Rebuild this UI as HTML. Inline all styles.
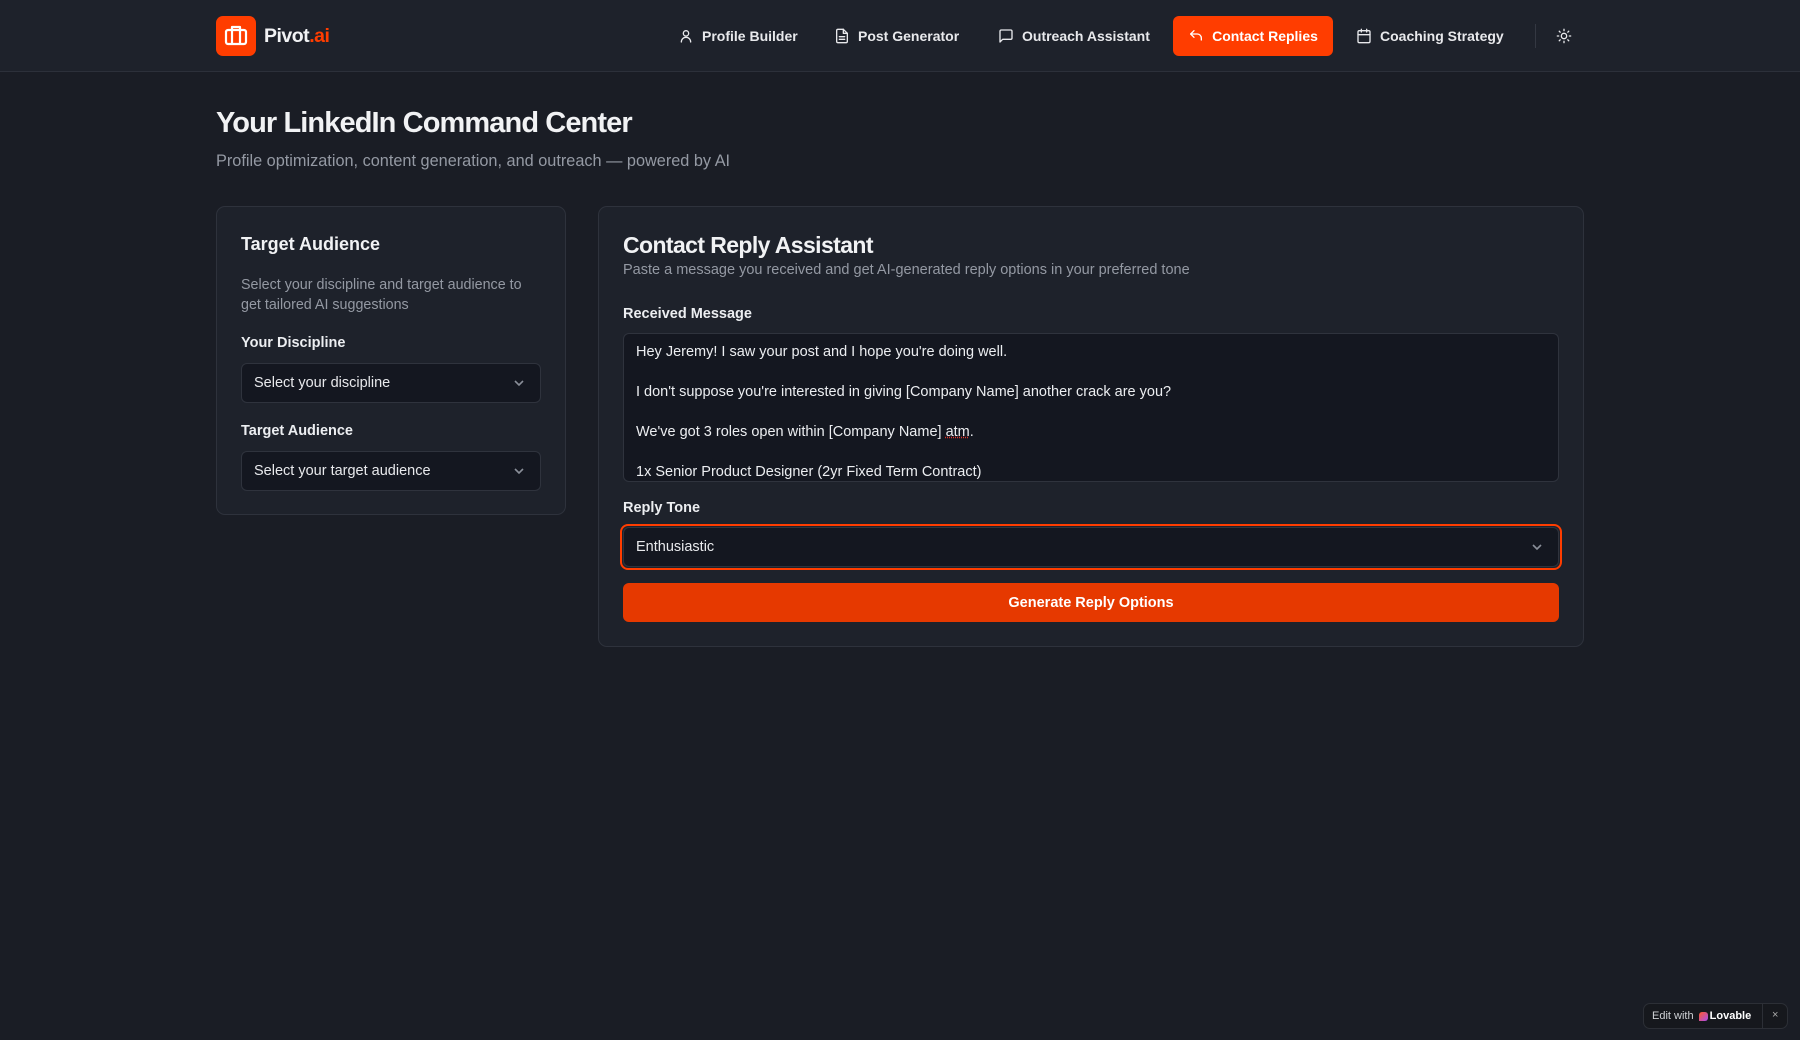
<!DOCTYPE html>
<html><head><meta charset="utf-8"><style>
*{box-sizing:border-box;margin:0;padding:0}
body{width:1800px;height:1040px;background:#1a1d25;font-family:"Liberation Sans",sans-serif;color:#f1f2f4;position:relative;overflow:hidden}
.abs{position:absolute}
header{position:absolute;left:0;top:0;width:1800px;height:72px;background:#1e222b;border-bottom:1px solid #2c303a}
.nav{position:absolute;top:16px;height:40px;display:flex;align-items:center;gap:8px;font-size:14px;font-weight:600;color:#e8e9ec}
.nav svg{width:16px;height:16px;fill:none;stroke:#e8e9ec;stroke-width:2;stroke-linecap:round;stroke-linejoin:round}
.card{position:absolute;background:#1e222b;border:1px solid #2e323c;border-radius:9px}
.lbl{position:absolute;font-size:14.5px;font-weight:600;color:#eceef1}
.sel{position:absolute;background:#141720;border:1px solid #2f333d;border-radius:6px;font-size:14.5px;color:#e8e9ec;display:flex;align-items:center;padding-left:12px}
.chev{position:absolute;right:14px;top:50%;margin-top:-5px;width:14px;height:10px}
.muted{color:#9499a3}
</style></head><body>
<header>
  <div class="abs" style="left:216px;top:16px;width:40px;height:40px;background:#ff3d00;border-radius:7px">
    <svg width="40" height="40" viewBox="0 0 40 40" fill="none" stroke="#fff" stroke-width="2.2" stroke-linejoin="round"><rect x="10" y="14" width="20" height="14" rx="2"/><path d="M16 14v-3h8v3M16 14v14M24 14v14"/></svg>
  </div>
  <div class="abs" style="left:264px;top:25px;font-size:19.5px;font-weight:700;letter-spacing:-0.5px">Pivot<span style="color:#ff3d00">.ai</span></div>
  <div class="nav" style="left:678px"><svg viewBox="0 0 24 24"><circle cx="12" cy="8" r="4"/><path d="M5 21c0-4 3-7 7-7s7 3 7 7"/></svg>Profile Builder</div>
  <div class="nav" style="left:834px"><svg viewBox="0 0 24 24"><path d="M14 2H6a2 2 0 0 0-2 2v16a2 2 0 0 0 2 2h12a2 2 0 0 0 2-2V8z"/><path d="M14 2v6h6M16 13H8M16 17H8"/></svg>Post Generator</div>
  <div class="nav" style="left:998px"><svg viewBox="0 0 24 24"><path d="M21 15a2 2 0 0 1-2 2H7l-4 4V5a2 2 0 0 1 2-2h14a2 2 0 0 1 2 2z"/></svg>Outreach Assistant</div>
  <div class="nav" style="left:1173px;width:160px;background:#ff3d00;border-radius:6px;justify-content:center;color:#fff"><svg viewBox="0 0 24 24" style="stroke:#fff"><path d="M9 14 4 9l5-5"/><path d="M4 9h10a6 6 0 0 1 6 6v3"/></svg>Contact Replies</div>
  <div class="nav" style="left:1356px"><svg viewBox="0 0 24 24"><rect x="3" y="4" width="18" height="18" rx="2"/><path d="M16 2v4M8 2v4M3 10h18"/></svg>Coaching Strategy</div>
  <div class="abs" style="left:1535px;top:24px;width:1px;height:24px;background:#343842"></div>
  <div class="nav" style="left:1556px"><svg viewBox="0 0 24 24"><circle cx="12" cy="12" r="4"/><path d="M12 2v2M12 20v2M4.9 4.9l1.4 1.4M17.7 17.7l1.4 1.4M2 12h2M20 12h2M4.9 19.1l1.4-1.4M17.7 6.3l1.4-1.4"/></svg></div>
</header>

<div class="abs" style="left:216px;top:107px;font-size:29px;font-weight:700;letter-spacing:-0.9px">Your LinkedIn Command Center</div>
<div class="abs muted" style="left:216px;top:152px;font-size:16.3px">Profile optimization, content generation, and outreach — powered by AI</div>

<div class="card" style="left:216px;top:206px;width:350px;height:309px">
  <div class="abs" style="left:24px;top:27px;font-size:18px;font-weight:600">Target Audience</div>
  <div class="abs muted" style="left:24px;top:68px;width:290px;font-size:14.3px;line-height:20px">Select your discipline and target audience to get tailored AI suggestions</div>
  <div class="lbl" style="left:24px;top:128px">Your Discipline</div>
  <div class="sel" style="left:24px;top:156px;width:300px;height:40px">Select your discipline<svg class="chev" viewBox="0 0 14 10" fill="none" stroke="#8a8f99" stroke-width="1.6"><path d="M3 3l4 4 4-4"/></svg></div>
  <div class="lbl" style="left:24px;top:216px">Target Audience</div>
  <div class="sel" style="left:24px;top:244px;width:300px;height:40px">Select your target audience<svg class="chev" viewBox="0 0 14 10" fill="none" stroke="#8a8f99" stroke-width="1.6"><path d="M3 3l4 4 4-4"/></svg></div>
</div>

<div class="card" style="left:598px;top:206px;width:986px;height:441px">
  <div class="abs" style="left:24px;top:25px;font-size:23px;font-weight:700;letter-spacing:-0.6px">Contact Reply Assistant</div>
  <div class="abs muted" style="left:24px;top:55px;font-size:14.5px">Paste a message you received and get AI-generated reply options in your preferred tone</div>
  <div class="lbl" style="left:24px;top:99px">Received Message</div>
  <div class="abs" style="left:24px;top:126px;width:936px;height:149px;background:#141720;border:1px solid #2f333d;border-radius:6px;overflow:hidden;padding:8px 12px;font-size:14.5px;line-height:20px;color:#eceef1">
    Hey Jeremy! I saw your post and I hope you're doing well.<br><br>I don't suppose you're interested in giving [Company Name] another crack are you?<br><br>We've got 3 roles open within [Company Name] <span style="text-decoration:underline dotted #e0332b">atm</span>.<br><br>1x Senior Product Designer (2yr Fixed Term Contract)
  </div>
  <div class="lbl" style="left:24px;top:293px">Reply Tone</div>
  <div class="abs" style="left:21px;top:317px;width:942px;height:46px;border:2px solid #ff3d00;border-radius:8px"></div>
  <div class="sel" style="left:24px;top:320px;width:936px;height:40px">Enthusiastic<svg class="chev" viewBox="0 0 14 10" fill="none" stroke="#8a8f99" stroke-width="1.6"><path d="M3 3l4 4 4-4"/></svg></div>
  <div class="abs" style="left:24px;top:376px;width:936px;height:39px;background:#e63900;border-radius:6px;display:flex;align-items:center;justify-content:center;font-size:14.5px;font-weight:600;color:#fff">Generate Reply Options</div>
</div>

<div class="abs" style="left:1643px;top:1003px;width:145px;height:26px;background:#16181d;border:1px solid #2c2f36;border-radius:7px;font-size:11px;color:#cfd1d5;display:flex;align-items:center;padding-left:8px">
  Edit with&nbsp;<span style="display:inline-block;width:9px;height:9px;background:linear-gradient(135deg,#ff5a2a,#a84cf0);border-radius:3px 3px 3px 0;margin:0 2px"></span><b style="color:#fff">Lovable</b>
  <span style="position:absolute;left:118px;top:0;width:1px;height:24px;background:#2c2f36"></span>
  <span style="position:absolute;left:128px;top:5px;color:#aaa">×</span>
</div>
</body></html>
